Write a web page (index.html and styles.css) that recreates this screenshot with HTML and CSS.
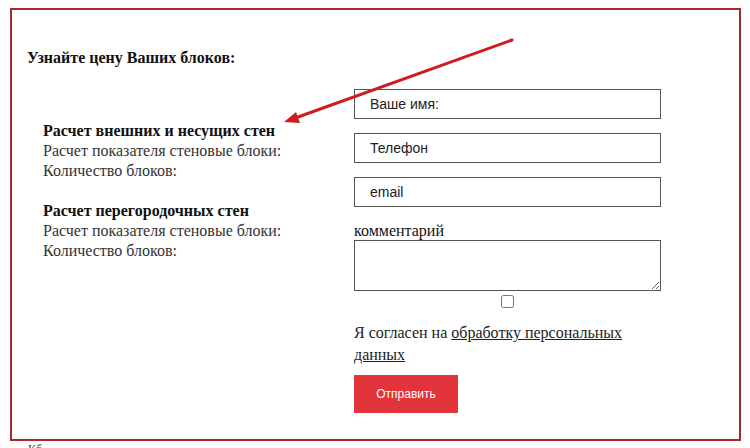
FILE: index.html
```html
<!DOCTYPE html>
<html>
	<head>
		<meta charset="UTF-8">
		<title>Узнайте цену Ваших блоков</title>
		<link rel="stylesheet" href="styles.css">
	</head>
	<body>
		
		<!--рамка калькулятора-->
		<div class="calc">
			
			<h3 class="calc-title">Узнайте цену Ваших блоков:</h3>
			
			<div class="calc-row">
				
				<!--расчеты-->
				<div class="calc-info">
					<div class="calc-group">
						<b>Расчет внешних и несущих стен</b>
						<p>Расчет показателя стеновые блоки:</p>
						<p>Количество блоков:</p>
					</div>
					<div class="calc-group">
						<b>Расчет перегородочных стен</b>
						<p>Расчет показателя стеновые блоки:</p>
						<p>Количество блоков:</p>
					</div>
				</div>
				
				<!--форма-->
				<form class="calc-form" action="javascript:;">
					<input class="field" type="text" placeholder="Ваше имя:">
					<input class="field" type="text" placeholder="Телефон">
					<input class="field" type="text" placeholder="email">
					<label class="comment-label">комментарий</label>
					<textarea class="comment"></textarea>
					<input class="agree-box" type="checkbox">
					<p class="agree">Я согласен на <a href="javascript:;">обработку персональных данных</a></p>
					<button class="send" type="button">Отправить</button>
				</form>
				
			</div>
			
			<!--стрелка-->
			<svg class="arrow" width="750" height="448" viewBox="0 0 750 448">
				<line x1="512" y1="40" x2="298" y2="117" stroke="#cf1c1f" stroke-width="3" stroke-linecap="round"/>
				<polygon points="284,122 296,112 300,123" fill="#cf1c1f"/>
			</svg>
			
		</div>
		
		<p class="below">Кб</p>
		
	</body>
</html>
```

FILE: styles.css
```css
/*сброс*/
*{
	margin: 0;
	padding: 0;
	box-sizing: border-box;
}

body{
	background-color: #fff;
	font-family: "Liberation Serif", "DejaVu Serif", serif;
	color: #111;
	overflow: hidden;
}

/*рамка*/
.calc{
	width: 731px;
	height: 433px;
	margin: 8px 0 0 10px;
	border: 2px solid #a12a2c;
	padding: 38px 0 0 15px;
}

.calc-title{
	font-size: 16px;
	line-height: 20px;
	font-weight: bold;
}

.calc-row{
	display: flex;
	margin-top: 21px;
}

/*левая колонка*/
.calc-info{
	width: 327px;
	padding: 32px 0 0 16px;
	font-size: 16px;
	line-height: 20px;
}

.calc-group{
	margin-bottom: 20px;
	color: #333;
}

.calc-group b{
	color: #111;
}

/*форма*/
.calc-form{
	width: 307px;
	display: flex;
	flex-direction: column;
}

.field{
	height: 30px;
	margin-bottom: 14px;
	border: 1px solid #555;
	padding-left: 15px;
	font-family: "Liberation Sans", Arial, sans-serif;
	font-size: 14px;
	color: #222;
	outline: none;
}

.field::placeholder{
	color: #222;
}

.comment-label{
	margin-top: 1px;
	font-size: 16px;
	line-height: 18px;
}

.comment{
	height: 51px;
	border: 1px solid #555;
	resize: vertical;
}

.agree-box{
	width: 13px;
	height: 13px;
	margin: 4px auto 0;
}

.agree{
	margin-top: 14px;
	font-size: 16px;
	line-height: 22px;
	color: #222;
}

.agree a{
	color: #222;
}

/*кнопка*/
.send{
	width: 104px;
	height: 38px;
	margin-top: 9px;
	border: none;
	background-color: #e1343b;
	color: #fff;
	font-family: "Liberation Sans", Arial, sans-serif;
	font-size: 12px;
}

/*стрелка поверх*/
.arrow{
	position: absolute;
	left: 0;
	top: 0;
	pointer-events: none;
}

.below{
	margin: 1px 0 0 28px;
	font-size: 12px;
	color: #444;
}
```
